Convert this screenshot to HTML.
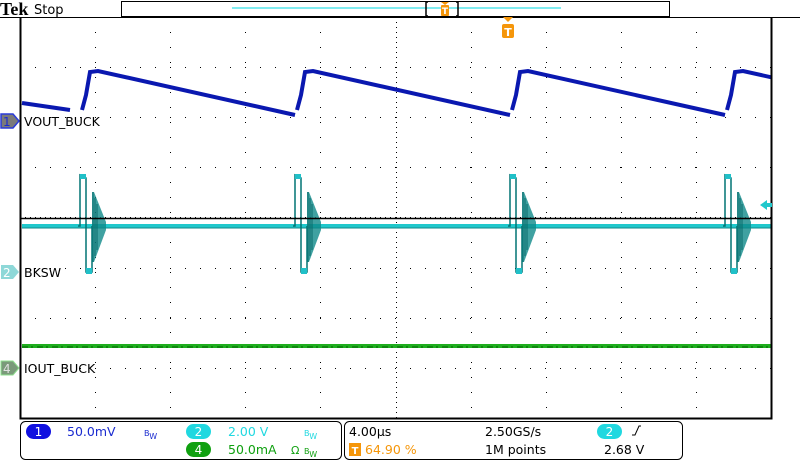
<!DOCTYPE html>
<html><head><meta charset="utf-8"><style>
html,body{margin:0;padding:0;background:#fff;width:800px;height:462px;overflow:hidden}
svg{display:block}
text{font-family:"DejaVu Sans","Liberation Sans",sans-serif}
</style></head><body>
<svg width="800" height="462" viewBox="0 0 800 462" xmlns="http://www.w3.org/2000/svg">
<defs>
<clipPath id="gc"><rect x="21" y="18" width="750" height="400"/></clipPath>
<g id="period">
 <path d="M62,110 L66,95 L70,72 L78,71 L275,115" fill="none" stroke="#0a18b0" stroke-width="4"/>
 <path d="M58,226 L60,226 L60,175 L66,178 L66,272 L72,272 L72,226" fill="none" stroke="#007373" stroke-width="1.5"/>
 <rect x="60" y="174" width="6" height="5" fill="#20c0c8"/>
 <rect x="66" y="268" width="6" height="6" fill="#20c0c8"/>
 <polygon points="72,192 74,192 86,222 86,230 74,262 72,262" fill="#0f8a8a" opacity="0.8"/>
 <path d="M73,192V262M75,198V256M77,204V250" stroke="#0a6a6a" stroke-width="1"/>
</g>
</defs>
<text x="0" y="15" font-weight="bold" font-size="18" fill="#000" style="font-family:'Liberation Serif',serif">Tek</text>
<text x="34" y="14" font-size="13" fill="#000">Stop</text>
<rect x="121.5" y="1.5" width="548" height="15" fill="#fff" stroke="#000"/>
<line x1="232" y1="8" x2="561" y2="8" stroke="#00d8e0" stroke-width="1"/>
<path d="M426,2 V16 M426,2 h2 M426,16 h2 M458,2 V16 M458,2 h-2 M458,16 h-2" stroke="#000" stroke-width="1.5" fill="none"/>
<path d="M441,2 h8 l-4,3 z" fill="#f5960a"/><rect x="441" y="5" width="8" height="11" rx="1" fill="#f5960a"/>
<text x="445" y="14" font-size="9" fill="#fff" text-anchor="middle" font-weight="bold">T</text>
<g stroke="#000" stroke-width="1" stroke-dasharray="1 14">
 <path d="M95.5,17V418M170.5,17V418M245.5,17V418M320.5,17V418M471.5,17V418M546.5,17V418M621.5,17V418M696.5,17V418"/>
 <path d="M20,67.5H771M20,117.5H771M20,167.5H771M20,268.5H771M20,318.5H771M20,368.5H771"/>
</g>
<g stroke="#000" stroke-width="1" stroke-dasharray="1 4">
 <path d="M396.5,17V418M20,217.5H771"/>
</g>
<path d="M0,17.5H800" stroke="#000" stroke-width="1"/>
<path d="M503,17 h10 l-5,5 z" fill="#f5960a"/><rect x="502" y="24" width="12" height="14" rx="2" fill="#f5960a"/>
<text x="508" y="36" font-size="11" fill="#fff" text-anchor="middle" font-weight="bold">T</text>
<rect x="22" y="344" width="749" height="4" fill="#1fae1f"/>
<line x1="22" y1="347" x2="771" y2="347" stroke="#0a7a0a" stroke-width="1.5" stroke-dasharray="6 3 2 4"/>
<path d="M22,103 L70,110" fill="none" stroke="#0a18b0" stroke-width="4"/>
<rect x="22" y="224" width="749" height="4" fill="#20c8cc"/>
<line x1="22" y1="228" x2="771" y2="228" stroke="#0f8a8a" stroke-width="1"/>
<g clip-path="url(#gc)">
<use href="#period" x="20" y="0"/>
<use href="#period" x="235" y="0"/>
<use href="#period" x="450" y="0"/>
<use href="#period" x="665" y="0"/>
</g>
<path d="M20,218.5H771" stroke="#000" stroke-width="1.5"/>
<path d="M20.5,17V418.5H771.5V17" fill="none" stroke="#000" stroke-width="2"/>
<path d="M760,205 l7,-5 v3 h5 v4 h-5 v3z" fill="#20c8cc"/>
<path d="M1,114 h12 l6,7 l-6,7 h-12z" fill="#7a7a7a" stroke="#2a3bd8" stroke-width="1.5"/>
<text x="3" y="126" font-size="12" fill="#1a2bd0">1</text>
<text x="24" y="126" font-size="12.5" fill="#000">VOUT_BUCK</text>
<path d="M1,265 h12 l6,7 l-6,7 h-12z" fill="#8ed8d8"/>
<text x="3" y="277" font-size="12" fill="#fff">2</text>
<text x="24" y="277" font-size="12.5" fill="#000">BKSW</text>
<path d="M1,361 h12 l6,7 l-6,7 h-12z" fill="#7a9a7a" stroke="#8ee08e"/>
<text x="3" y="373" font-size="12" fill="#e0e0e0">4</text>
<text x="24" y="373" font-size="12.5" fill="#000">IOUT_BUCK</text>
<rect x="20.5" y="421.5" width="321" height="38" rx="5" fill="#fff" stroke="#000"/>
<rect x="344.5" y="421.5" width="338" height="38" rx="5" fill="#fff" stroke="#000"/>
<rect x="26" y="424" width="25" height="15" rx="7.5" fill="#1010e0"/>
<text x="38.5" y="436" font-size="12" fill="#fff" text-anchor="middle">1</text>
<text x="67" y="436" font-size="12.5" fill="#1a2bd0">50.0mV</text>
<text x="144" y="436" font-size="8" fill="#1a2bd0">B<tspan dy="3">W</tspan></text>
<rect x="186" y="424" width="25" height="15" rx="7.5" fill="#20d8e0"/>
<text x="198.5" y="436" font-size="12" fill="#fff" text-anchor="middle">2</text>
<text x="228" y="436" font-size="12.5" fill="#20d8e0">2.00 V</text>
<text x="304" y="436" font-size="8" fill="#20d8e0">B<tspan dy="3">W</tspan></text>
<rect x="186" y="442" width="25" height="15" rx="7.5" fill="#10a010"/>
<text x="198.5" y="454" font-size="12" fill="#fff" text-anchor="middle">4</text>
<text x="228" y="454" font-size="12.5" fill="#10a010">50.0mA</text>
<text x="291" y="454" font-size="11" fill="#10a010">Ω</text>
<text x="304" y="454" font-size="8" fill="#10a010">B<tspan dy="3">W</tspan></text>
<text x="349" y="436" font-size="12.5" fill="#000">4.00μs</text>
<rect x="349" y="443" width="12" height="13" fill="#f5960a"/>
<text x="355" y="454" font-size="10" fill="#fff" text-anchor="middle" font-weight="bold">T</text>
<text x="365" y="454" font-size="12.5" fill="#f5960a">64.90 %</text>
<text x="485" y="436" font-size="12.5" fill="#000">2.50GS/s</text>
<text x="485" y="454" font-size="12.5" fill="#000">1M points</text>
<rect x="597" y="424" width="25" height="15" rx="7.5" fill="#20d8e0"/>
<text x="609.5" y="436" font-size="12" fill="#fff" text-anchor="middle">2</text>
<path d="M632,435 h3 l4,-9 h2" fill="none" stroke="#000" stroke-width="1"/>
<text x="604" y="454" font-size="12.5" fill="#000">2.68 V</text>
</svg>
</body></html>
